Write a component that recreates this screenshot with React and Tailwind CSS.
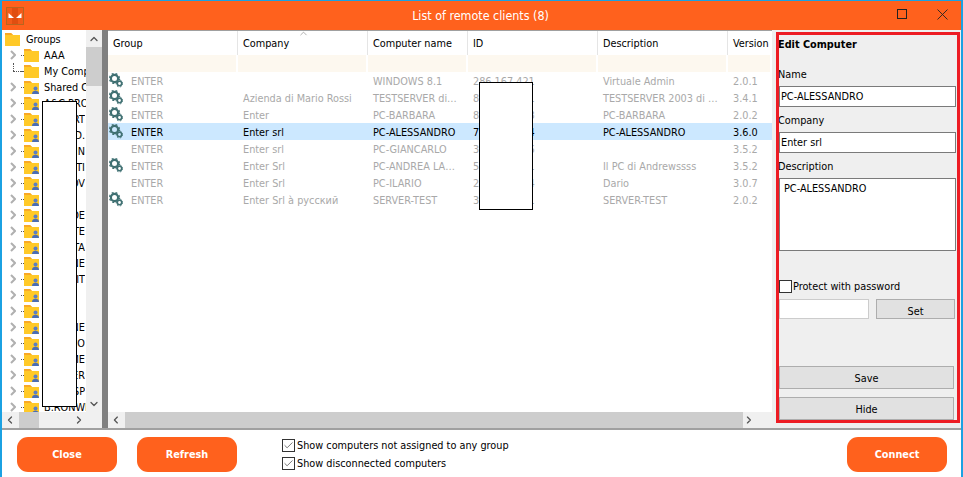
import React from "react";
import { ChevronRight, ChevronLeft, ChevronUp, ChevronDown, Check } from "lucide-react";

const font = "font-['DejaVu_Sans_Condensed','DejaVu_Sans',sans-serif]";

function Folder({ person, className = "" }) {
  return (
    <svg width="16" height="13" viewBox="0 0 16 13" className={"shrink-0 " + className}>
      <path d="M0 0h6l2 2h7v11H0z" fill="#ffc928" />
      <path d="M0 0h6l2 2H0z" fill="#f9a825" />
      {person && (
        <g>
          <circle cx="11.5" cy="7.5" r="2" fill="#5b7fc4" />
          <path d="M8 13c0-2.2 1.4-3.2 3.5-3.2s3.5 1 3.5 3.2z" fill="#4a6db5" />
        </g>
      )}
    </svg>
  );
}

function TreeChevron() {
  return (
    <svg width="6" height="10" viewBox="0 0 6 10" className="shrink-0">
      <path d="M1 1l4 4-4 4" fill="none" stroke="#b0b0b0" strokeWidth="2" />
    </svg>
  );
}

function Gears() {
  return (
    <svg width="14" height="15" viewBox="0 0 14 15" className="shrink-0">
      <g fill="none" stroke="#3f7072">
        <circle cx="5.5" cy="5.5" r="3.6" strokeWidth="2.2" />
        <circle cx="5.5" cy="5.5" r="5" strokeWidth="1.2" strokeDasharray="2 2" />
        <circle cx="10.5" cy="10.5" r="2.2" strokeWidth="1.6" />
        <circle cx="10.5" cy="10.5" r="3.4" strokeWidth="1" strokeDasharray="1.6 1.6" />
      </g>
    </svg>
  );
}

/* kind: 0 plain folder, 1 shared folder, 2 leaf without expander; tail: text right-aligned under the blanked area */
const tree = [
  ["AAA", 0], ["My Computers", 2], ["Shared Computers", 1], ["A&C PROGETTI", 1],
  ["ALBERT", 1, 1], ["BIANCHI D.", 1, 1], ["BONIN", 1, 1], ["BATTI", 1, 1], ["CASANOV", 1, 1], ["", 1],
  ["CORRADE", 1, 1], ["DANTE", 1, 1], ["DELTA", 1, 1], ["FERRONE", 1, 1], ["GRAFFIT", 1, 1],
  ["", 1], ["", 1], ["LEONE", 1, 1], ["MARCO", 1, 1], ["NOEMIME", 1, 1], ["PIER", 1, 1], ["ROSSP", 1, 1], ["B.RONWELL", 1],
];

const rows = [
  [1, "ENTER", "", "WINDOWS 8.1", "286 167 421", "Virtuale Admin", "2.0.1"],
  [1, "ENTER", "Azienda di Mario Rossi", "TESTSERVER di…", "811 902 331", "TESTSERVER 2003 di …", "3.4.1"],
  [1, "ENTER", "Enter", "PC-BARBARA", "854 220 118", "PC-BARBARA", "2.0.2"],
  [1, "ENTER", "Enter srl", "PC-ALESSANDRO", "760 114 254", "PC-ALESSANDRO", "3.6.0"],
  [0, "ENTER", "Enter srl", "PC-GIANCARLO", "345 871 006", "", "3.5.2"],
  [1, "ENTER", "Enter Srl", "PC-ANDREA LA…", "512 663 981", "Il PC di Andrewssss", "3.5.2"],
  [0, "ENTER", "Enter Srl", "PC-ILARIO", "230 447 734", "Dario", "3.0.7"],
  [1, "ENTER", "Enter Srl à русский", "SERVER-TEST", "377 190 521", "SERVER-TEST", "2.0.2"],
];

const cols = "grid grid-cols-[130px_130px_100px_130px_130px_44px]";

function OrangeButton({ children }) {
  return (
    <button className="w-[100px] h-[35px] rounded-[11px] bg-[#ff611d] text-white text-[10.8px] font-bold pt-[2px]">
      {children}
    </button>
  );
}

function GrayButton({ children, className = "" }) {
  return (
    <button className={"bg-[#e1e1e1] border border-[#adadad] text-[10.8px] text-black pt-[4px] " + className}>{children}</button>
  );
}

function Field({ value }) {
  return (
    <div className="h-[21px] w-[177px] ml-[3px] mt-[5px] bg-white border border-[#7a7a7a] pl-[1px] leading-[19px] text-black">
      {value}
    </div>
  );
}

function Label({ children, className = "mt-[6px]" }) {
  return <div className={"h-[14px] pt-[1px] leading-[14px] ml-[2px] " + className}>{children}</div>;
}

function Tick() {
  return (
    <span className="w-[13px] h-[13px] border border-[#333] bg-white flex items-center justify-center shrink-0">
      <Check size={11} strokeWidth={1.6} color="#444" />
    </span>
  );
}

export default function App() {
  return (
    <div className={"relative w-[963px] h-[477px] overflow-hidden bg-white flex flex-col border-x-2 border-t border-[#1ba1e2] text-black text-[10.8px] " + font}>
      {/* title bar */}
      <div className="relative h-[29px] shrink-0 bg-[#ff611d] flex items-center justify-center text-white text-[12.4px] pt-[1px]">
        <svg width="18" height="18" viewBox="0 0 18 18" className="absolute left-[4px] top-[6px]">
          <rect x="0.5" y="0.5" width="17" height="17" fill="#f25a18" stroke="#b8651f" />
          <rect x="6" y="1" width="6" height="16" fill="#e04e10" />
          <path d="M2.5 6L8 11H2.5z" fill="#fff" />
          <path d="M15.5 6L10 11h5.5z" fill="#fff" />
        </svg>
        <span className="-ml-[2px]">List of remote clients (8)</span>
        <span className="absolute left-[895px] top-[8px] w-[10px] h-[10px] border border-[#222]" />
        <svg width="11" height="11" viewBox="0 0 11 11" className="absolute left-[935px] top-[8px]">
          <path d="M0.5 0.5l10 10M10.5 0.5l-10 10" stroke="#222" strokeWidth="0.9" fill="none" />
        </svg>
      </div>

      {/* main */}
      <div className="flex h-[398px] shrink-0">
        {/* tree */}
        <div className="relative w-[100px] shrink-0 flex flex-col">
          <div className="flex h-[382px]">
            <div className="w-[84px] overflow-hidden pt-[1px]">
              <div className="h-[16px] flex items-center pl-[3px]">
                <Folder />
                <span className="ml-[5px] whitespace-nowrap pt-[2px]">Groups</span>
              </div>
              {tree.map(([name, kind, tail], i) => (
                <div key={i} className="relative h-[16px] flex items-center whitespace-nowrap">
                  <span className="w-[8px] shrink-0" />
                  {kind === 2 ? <span className="w-[6px] shrink-0" /> : <TreeChevron />}
                  <span className="w-[5px] shrink-0" />
                  <span className="w-[3px] shrink-0 border-t border-dotted border-[#555]" />
                  <Folder person={kind === 1} />
                  {tail ? (
                    <span className="ml-[4px] w-[41px] shrink-0 overflow-hidden flex justify-end pt-[2px]">{name}</span>
                  ) : (
                    <span className="ml-[4px] pt-[2px]">{name}</span>
                  )}
                  {kind === 2 && (
                    <span className="absolute left-[11px] top-0 h-[8px] border-l border-dotted border-[#555]" />
                  )}
                  {kind === 2 && (
                    <span className="absolute left-[11px] top-[8px] w-[10px] border-t border-dotted border-[#555]" />
                  )}
                </div>
              ))}
            </div>
            <div className="w-[16px] bg-[#f0f0f0] flex flex-col items-center">
              <ChevronUp size={12} strokeWidth={2.6} color="#555" className="mt-[3px]" />
              <div className="w-full h-[39px] bg-[#cdcdcd] mt-[2px]" />
              <div className="flex-1" />
              <ChevronDown size={12} strokeWidth={2.6} color="#555" className="mb-[2px]" />
            </div>
          </div>
          <div className="h-[16px] bg-[#f0f0f0] flex items-center">
            <ChevronLeft size={12} strokeWidth={2.6} color="#555" className="ml-[2px]" />
            <div className="w-[20px] h-full bg-[#cdcdcd] ml-[3px]" />
            <div className="flex-1" />
            <ChevronRight size={12} strokeWidth={2.6} color="#555" className="mr-[17px]" />
          </div>
          <div className="absolute left-[40px] top-[71px] w-[35px] h-[306px] bg-white border border-black" />
        </div>

        {/* splitter */}
        <div className="w-[6px] bg-[#808080] shrink-0" />

        {/* list */}
        <div className="relative w-[664px] shrink-0 flex flex-col border-t border-[#a0a0a0]">
          <div className={cols + " h-[24px]"}>
            {["Group", "Company", "Computer name", "ID", "Description", "Version"].map((h, i) => (
              <div key={h} className={"flex items-center pl-[5px] pt-[2px] whitespace-nowrap " + (i < 5 ? "border-r border-[#e5e5e5]" : "")}>
                {h}
              </div>
            ))}
          </div>
          <ChevronUp size={11} strokeWidth={1} color="#555" className="absolute left-[190px] -top-[3px]" />
          <div className={cols + " h-[17px]"}>
            {[0, 1, 2, 3, 4, 5].map((i) => (
              <div key={i} className="bg-[#fdf8ef] mr-[2px]" />
            ))}
          </div>
          <div className="flex-1">
            {rows.map((r, idx) => {
              const sel = idx === 3;
              return (
                <div key={idx} className={cols + " h-[17px] leading-[17px] whitespace-nowrap " + (sel ? "bg-[#cce8ff] text-black" : "text-[#a9a9a9]")}>
                  <div className="flex items-center pl-[1px] h-[17px]">
                    {r[0] ? <Gears /> : <span className="w-[14px]" />}
                    <span className="ml-[8px] pt-[2px]">{r[1]}</span>
                  </div>
                  <div className="pl-[5px] pt-[1px] h-[17px]">{r[2]}</div>
                  <div className="pl-[5px] pt-[1px] h-[17px]">{r[3]}</div>
                  <div className="pl-[5px] pt-[1px] h-[17px]">{r[4]}</div>
                  <div className="pl-[5px] pt-[1px] h-[17px]">{r[5]}</div>
                  <div className="pl-[5px] pt-[1px] h-[17px]">{r[6]}</div>
                </div>
              );
            })}
          </div>
          <div className="h-[16px] bg-[#f0f0f0] flex items-center">
            <ChevronLeft size={12} strokeWidth={2.6} color="#555" className="ml-[2px]" />
            <div className="w-[630px] h-full bg-[#cdcdcd] ml-[3px]" />
            <div className="flex-1" />
            <ChevronRight size={12} strokeWidth={2.6} color="#555" className="mr-[17px]" />
          </div>
          <div className="absolute left-[371px] top-[51px] w-[54px] h-[128px] bg-white border border-black" />
        </div>

        {/* edit panel */}
        <div className="relative flex-1 bg-[#efefef] flex flex-col pl-[4px]">
          <div className="font-bold h-[16px] pt-[1px] leading-[16px] mt-[6px] ml-[2px]">Edit Computer</div>
          <Label className="mt-[15px]">Name</Label>
          <Field value="PC-ALESSANDRO" />
          <Label>Company</Label>
          <Field value="Enter srl" />
          <Label>Description</Label>
          <div className="h-[73px] w-[177px] ml-[3px] mt-[5px] bg-white border border-[#7a7a7a] pl-[4px] pt-[1px] leading-[18px]">PC-ALESSANDRO</div>
          <div className="flex items-center mt-[29px] ml-[3px] h-[13px]">
            <span className="w-[13px] h-[13px] border border-[#333] bg-white shrink-0" />
            <span className="ml-[1px] pt-[2px]">Protect with password</span>
          </div>
          <div className="flex mt-[6px] ml-[3px] h-[20px]">
            <div className="w-[90px] bg-white border border-[#cccccc]" />
            <GrayButton className="ml-[7px] w-[79px]">Set</GrayButton>
          </div>
          <GrayButton className="h-[23px] w-[175px] ml-[3px] mt-[47px]">Save</GrayButton>
          <GrayButton className="h-[23px] w-[175px] ml-[3px] mt-[8px]">Hide</GrayButton>
          <div className="absolute left-[4px] top-[2px] w-[184px] h-[391px] border-[3px] border-[#ed1c24] pointer-events-none" />
        </div>
      </div>

      {/* footer */}
      <div className="flex-1 border-t-2 border-[#a0a0a0] flex items-center pl-[15px] pr-[14px] pt-[1px]">
        <OrangeButton>Close</OrangeButton>
        <div className="w-[20px]" />
        <OrangeButton>Refresh</OrangeButton>
        <div className="ml-[45px] flex flex-col gap-[5px]">
          <label className="flex items-center gap-[2px] h-[13px]"><Tick /><span className="pt-[2px]">Show computers not assigned to any group</span></label>
          <label className="flex items-center gap-[2px] h-[13px]"><Tick /><span className="pt-[2px]">Show disconnected computers</span></label>
        </div>
        <div className="flex-1" />
        <OrangeButton>Connect</OrangeButton>
      </div>
    </div>
  );
}
